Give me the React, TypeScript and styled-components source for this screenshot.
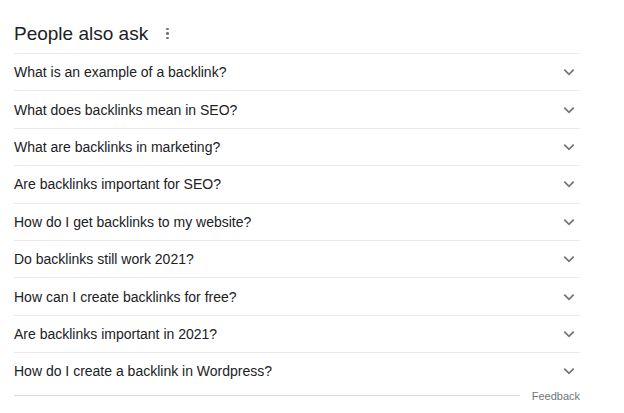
import styled, { createGlobalStyle } from 'styled-components';

const questions = [
	'What is an example of a backlink?',
	'What does backlinks mean in SEO?',
	'What are backlinks in marketing?',
	'Are backlinks important for SEO?',
	'How do I get backlinks to my website?',
	'Do backlinks still work 2021?',
	'How can I create backlinks for free?',
	'Are backlinks important in 2021?',
	'How do I create a backlink in Wordpress?',
];

const Global = createGlobalStyle`
	body {
		margin: 0;
		background: #ffffff;
		font-family: "Liberation Sans", Arial, sans-serif;
		color: #202124;
	}
`;

const Wrap = styled.div`
	width: 566px;
	padding: 14px 0 0 14px;
`;

const Header = styled.div`
	display: flex;
	align-items: center;
	height: 39px;
	gap: 12px;
`;

const Title = styled.h2`
	margin: 0;
	font-size: 19px;
	font-weight: 400;
	line-height: 26px;
`;

const Dots = styled.span`
	display: flex;
	flex-direction: column;
	gap: 2px;
	padding: 0 6px;
	span {
		width: 2.5px;
		height: 2.5px;
		border-radius: 50%;
		background: #70757a;
	}
`;

const Row = styled.div`
	display: flex;
	align-items: center;
	justify-content: space-between;
	height: 36.4px;
	border-top: 1px solid #ebebeb;
	font-size: 14px;
	cursor: pointer;
`;

const Chevron = () => (
	<svg width="14" height="14" viewBox="0 0 24 24" style={{ marginRight: 4 }}>
		<path d="M4 8l8 8 8-8" fill="none" stroke="#70757a" strokeWidth="3" />
	</svg>
);

const Footer = styled.div`
	display: flex;
	align-items: center;
	gap: 12px;
	height: 14px;
	margin-top: -1px;
`;

const Line = styled.div`
	flex: 1;
	border-top: 1px solid #dadce0;
`;

const Feedback = styled.span`
	font-size: 11px;
	color: #70757a;
`;

export default function App() {
	return (
		<Wrap>
			<Global />
			<Header>
				<Title>People also ask</Title>
				<Dots><span /><span /><span /></Dots>
			</Header>
			{questions.map(q => (
				<Row key={q}>
					<span>{q}</span>
					<Chevron />
				</Row>
			))}
			<Footer>
				<Line />
				<Feedback>Feedback</Feedback>
			</Footer>
		</Wrap>
	);
}
